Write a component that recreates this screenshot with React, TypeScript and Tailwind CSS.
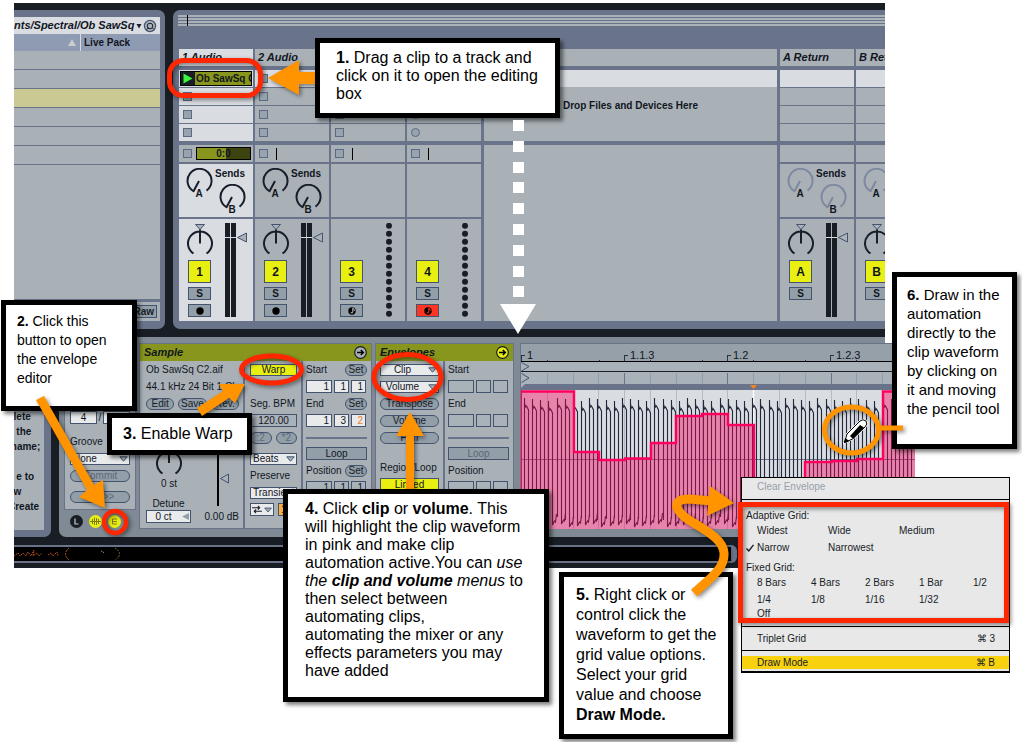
import React from "react";

/* ---------- Small shared controls ---------- */

function Arrow({ className }: { className: string }) {
  return (
    <svg width="9" height="6" viewBox="0 0 9 6" className={className} aria-hidden="true">
      <path d="M0.8 0.8H8.2L4.5 5.2Z" fill="#a9b1b9" stroke="#44546f" />
    </svg>
  );
}

function Pill({ children, dim = false, grow = false }: { children: React.ReactNode; dim?: boolean; grow?: boolean }) {
  return (
    <button
      className={`flex h-3 items-center justify-center whitespace-pre rounded-full border border-[#44546f] bg-[#929ea8] px-0.5 leading-none ${
        grow ? "min-w-0 flex-1" : "w-[22px]"
      } ${dim ? "text-[#5d6976]" : "text-[#171c26]"}`}
    >
      {children}
    </button>
  );
}

function Drop({ label, options, center = false }: { label: string; options: string[]; center?: boolean }) {
  return (
    <div className="relative flex w-full">
      <select
        aria-label={label}
        className={`h-3 w-full appearance-none border border-[#44546f] bg-[#e9eaec] px-0.5 leading-none ${
          center ? "pr-4 text-center" : ""
        }`}
      >
        {options.map((o) => (
          <option key={o}>{o}</option>
        ))}
      </select>
      <Arrow className="pointer-events-none absolute right-0.5 top-[3px]" />
    </div>
  );
}

function Field({ label, value, className }: { label: string; value: string; className: string }) {
  return (
    <input
      aria-label={label}
      defaultValue={value}
      className={`h-[13px] min-w-0 border border-[#44546f] px-0.5 leading-none ${className}`}
    />
  );
}

function Row({ children, className = "" }: { children?: React.ReactNode; className?: string }) {
  return <div className={`flex h-[17px] shrink-0 items-center ${className}`}>{children}</div>;
}

/* ---------- Session view ---------- */

function SendKnob({ name, dim }: { name: string; dim: boolean }) {
  const stroke = dim ? "#7d89a0" : "#191e2b";
  return (
    <svg width="28" height="32" viewBox="0 0 28 32" role="img" aria-label={`Send ${name}`}>
      <path d="M14 13L8.5 23.2A12 12 0 1 1 21.5 22.6" fill="none" stroke={stroke} strokeWidth="2" strokeLinejoin="round" />
      <text x="14" y="29" textAnchor="middle" fontSize="10" fontWeight="700" fill="#12161f">
        {name}
      </text>
    </svg>
  );
}

function PanKnob() {
  return (
    <svg width="28" height="34" viewBox="0 0 28 34" role="img" aria-label="Pan">
      <path d="M9.5 1.5H18.5L14 6.5Z" fill="#a9b1b9" stroke="#44546f" />
      <path d="M14 6.5V20.5M7.5 30.5A12 12 0 1 1 20.5 30.5" fill="none" stroke="#191e2b" strokeWidth="2" />
    </svg>
  );
}

function Meter() {
  return (
    <svg width="24" height="94" viewBox="0 0 24 94" role="img" aria-label="Level">
      <path d="M0 0H5V94H0ZM6 0H11V94H6Z" fill="#191e25" />
      <path d="M0 14.5H11" stroke="#d9dce1" />
      <path d="M12.5 14.5L21.5 10V19Z" fill="#a9b1b9" stroke="#44546f" />
    </svg>
  );
}

function MidiMeter() {
  return (
    <svg width="24" height="94" viewBox="0 0 24 94" role="img" aria-label="MIDI activity">
      {Array.from({ length: 12 }, (_, i) => (
        <circle key={i} cx="12" cy={2.8 + i * 8} r="3" fill="#191e25" />
      ))}
    </svg>
  );
}

function Slot({ round = false }: { round?: boolean }) {
  return (
    <button
      aria-label="Clip slot"
      className={`size-[9px] shrink-0 border border-[#5b6a80] bg-[#98a3b0] ${round ? "rounded-full" : ""}`}
    />
  );
}

type TrackInfo = {
  id: string;
  title: string;
  kind: "audio" | "midi" | "return";
  selected?: boolean;
  playing?: boolean;
  armed?: boolean;
};

function Track({ t }: { t: TrackInfo }) {
  const bg = t.selected ? "bg-[#d9dce1]" : "bg-[#a9b1b7]";
  const isReturn = t.kind === "return";
  return (
    <section className="w-[74px] shrink-0 whitespace-nowrap">
      <h3 className={`mb-1 h-[17px] pl-[3px] text-[11px] font-bold italic leading-4 ${bg}`}>{t.title}</h3>
      <div className="mb-1 flex flex-col gap-px">
        {[0, 1, 2, 3].map((r) => (
          <div key={r} className={`flex h-[17px] items-center ${r === 0 ? "bg-[#d9dce1]" : bg} ${t.playing && r === 0 ? "px-px" : "px-1"}`}>
            {t.playing && r === 0 ? (
              <button className="flex h-[15px] w-full overflow-hidden border border-black bg-[#88961d] text-[10px] font-bold leading-[13px]">
                <svg width="14" height="13" viewBox="0 0 14 13" className="shrink-0 bg-[#191e25]" aria-hidden="true">
                  <path d="M2.5 1.5L11.5 6.5L2.5 11.5Z" fill="#3cf53c" />
                </svg>
                <span className="pl-px">Ob SawSq C</span>
              </button>
            ) : (
              !isReturn && <Slot round={t.armed} />
            )}
          </div>
        ))}
      </div>
      <div className={`mb-0.5 flex h-[17px] items-center px-1 ${isReturn ? bg : "bg-[#a9b1b7]"}`}>
        {!isReturn && <Slot />}
        {t.playing ? (
          <span className="-mr-0.5 ml-1 flex h-[13px] flex-1 items-center justify-center border border-black bg-linear-to-r from-[#88961d] from-55% to-[#3c430e] to-55% text-[10px] font-bold leading-none">
            0:0
          </span>
        ) : (
          !isReturn && <span className="ml-2 h-3 w-px bg-black" />
        )}
      </div>
      <div className={`mb-0.5 flex h-[53px] ${bg}`}>
        {t.kind !== "midi" && (
          <>
            <div className="pl-1.5 pt-1">
              <SendKnob name="A" dim={isReturn} />
            </div>
            <div className="flex flex-col items-center pl-px pt-1 text-[10px] font-bold">
              <span className="h-4 leading-3">Sends</span>
              <div className="pl-1">
                <SendKnob name="B" dim={isReturn} />
              </div>
            </div>
          </>
        )}
      </div>
      <div className={`flex h-[102px] ${bg}`}>
        <div className="flex w-[41px] flex-col items-center gap-1 pt-1">
          <div className="h-[33px]">{t.kind !== "midi" && <PanKnob />}</div>
          <button className="size-[23px] border border-[#44546f] bg-[#e9f011] text-xs font-bold leading-none">{t.id}</button>
          <button className="h-[13px] w-[23px] border border-[#44546f] bg-[#929ea8] text-[10px] font-bold leading-none">S</button>
          {!isReturn && (
            <button
              aria-label="Arm"
              className={`flex h-[13px] w-[23px] items-center justify-center border border-[#44546f] ${t.armed ? "bg-[#ff3421]" : "bg-[#929ea8]"}`}
            >
              <svg width="8" height="8" viewBox="0 0 8 8" aria-hidden="true">
                <circle cx="4" cy="4" r="3.7" fill="#000" />
                {t.kind === "midi" && (
                  <path d="M4.8 1.2V5.6M4.8 5.8H2.6M4.8 1.2Q6.4 2 6.4 3.8" fill="none" stroke={t.armed ? "#ff3421" : "#c4cbd2"} />
                )}
              </svg>
            </button>
          )}
        </div>
        <div className="pl-[5px] pt-1">{t.kind === "midi" ? <MidiMeter /> : <Meter />}</div>
      </div>
    </section>
  );
}

function Browser() {
  return (
    <aside className="flex w-[151px] shrink-0 flex-col overflow-hidden rounded-r-[7px] bg-[#69748b] pb-2 pr-[5px] pt-[7px]">
      <div className="flex h-[17px] items-center justify-between bg-[#d9dce1] pr-[3px]">
        <span className="whitespace-nowrap text-[11px] font-bold italic">nts/Spectral/Ob SawSq</span>
        <svg width="21" height="14" viewBox="0 0 21 14" aria-hidden="true">
          <path d="M0.500 5H5.500L3 9.500Z" fill="#191e25" />
          <circle cx="14" cy="7" r="5.6" fill="#a9b1b9" stroke="#44546f" strokeWidth="1.2" />
          <circle cx="14" cy="7" r="2.8" fill="none" stroke="#191e25" />
          <path d="M10.5 10.500L12.500 8.800M16.500 9L18 10.500" stroke="#191e25" />
        </svg>
      </div>
      <div className="flex h-[17px] bg-[#8f9bb2] text-[10px] font-bold">
        <div className="flex w-[67px] items-center justify-end border-r border-[#d9dce1] pr-1">
          <svg width="8" height="7" viewBox="0 0 8 7" aria-hidden="true">
            <path d="M4 0L8 7H0Z" fill="#c9ccc9" />
          </svg>
        </div>
        <span className="pl-[3px] leading-[17px]">Live Pack</span>
      </div>
      <ul className="flex-1 bg-[#a9b1b7]">
        {[0, 1, 2, 3, 4, 5].map((r) => (
          <li key={r} className={`h-[19px] border-b border-[#69748b] ${r === 2 ? "bg-[#cac993]" : ""}`} />
        ))}
      </ul>
      <div className="mt-[3px] flex h-[19px] items-center justify-end bg-[#a9b1b7] pr-[3px]">
        <button className="h-[13px] border border-[#44546f] bg-[#929ea8] px-0.5 text-[10px] font-bold leading-none text-[#171c26]">Raw</button>
      </div>
    </aside>
  );
}

const tracks: TrackInfo[] = [
  { id: "1", title: "1 Audio", kind: "audio", selected: true, playing: true },
  { id: "2", title: "2 Audio", kind: "audio" },
  { id: "3", title: "", kind: "midi" },
  { id: "4", title: "", kind: "midi", armed: true },
];
const returns: TrackInfo[] = [
  { id: "A", title: "A Return", kind: "return" },
  { id: "B", title: "B Return", kind: "return" },
];

function Session() {
  return (
    <main className="min-w-0 flex-1 overflow-hidden rounded-l-[7px] bg-[#69748b] pb-2 pl-1.5 pt-[5px]">
      <div className="-ml-px mb-[23px] flex h-[11px] flex-col bg-[#69748b]">
        <div className="relative flex flex-1 flex-col gap-px">
          <span className="flex-1 bg-[#a9b1b7]" />
          <span className="flex-1 bg-[#a9b1b7]" />
          <span className="flex-1 bg-[#a9b1b7]" />
          <span className="flex-1 bg-[#a9b1b7]" />
          <span className="absolute inset-y-0 left-[9px] w-px bg-black" />
        </div>
      </div>
      <div className="flex">
        <div className="flex gap-0.5">
          {tracks.map((t) => (
            <Track key={t.id} t={t} />
          ))}
        </div>
        <div className="mx-[3px] flex min-w-0 flex-1 flex-col gap-1">
          <div className="h-[17px] bg-[#a9b1b7]" />
          <div className="flex h-[71px] flex-col bg-[#a9b1b7]">
            <div className="h-[17px] shrink-0 bg-[#d9dce1]" />
            <p className="pt-3 text-center text-[10px] font-bold leading-[14px]">Drop Files and Devices Here</p>
          </div>
          <div className="flex-1 bg-[#a9b1b7]" />
        </div>
        <div className="flex w-[105px] gap-0.5 overflow-hidden">
          {returns.map((t) => (
            <Track key={t.id} t={t} />
          ))}
        </div>
      </div>
    </main>
  );
}

/* ---------- Clip view ---------- */

function PanelHead({ title, lit = false }: { title: string; lit?: boolean }) {
  return (
    <div className="flex h-[17px] items-center justify-between bg-[#88961d] px-1">
      <h3 className="text-[11px] font-bold italic leading-none">{title}</h3>
      <button aria-label={`${title} options`} className="size-[13px]">
        <svg width="13" height="13" viewBox="0 0 13 13" aria-hidden="true">
          <circle cx="6.5" cy="6.5" r="5.8" fill={lit ? "#e9f011" : "#a9b1b9"} stroke="#191e25" strokeWidth="1.2" />
          <path d="M3 6.5H9M6.8 4L9.3 6.5L6.8 9" fill="none" stroke="#000" strokeWidth="1.5" />
        </svg>
      </button>
    </div>
  );
}

function Triple({ label, values, lit = false, accent = false }: { label: string; values: string[]; lit?: boolean; accent?: boolean }) {
  const bg = lit ? "bg-[#e9eaec]" : "bg-[#a9b1b9]";
  return (
    <Row className="gap-0.5">
      <Field label={`${label} bar`} value={values[0]} className={`w-[26px] text-right ${bg}`} />
      <Field label={`${label} beat`} value={values[1]} className={`w-[15px] text-right ${bg}`} />
      <Field label={`${label} sixteenth`} value={values[2]} className={`w-[15px] text-right ${bg} ${accent ? "text-[#f07a1c]" : ""}`} />
    </Row>
  );
}

function Times({ active }: { active: boolean }) {
  const v = (a: string[]) => (active ? a : ["", "", ""]);
  return (
    <div className="flex w-[61px] shrink-0 flex-col">
      <Row className="justify-between">
        Start {active && <Pill>Set</Pill>}
      </Row>
      <Triple label="Start" values={v(["1", "1", "1"])} lit={active} />
      <Row className="justify-between">
        End {active && <Pill>Set</Pill>}
      </Row>
      <Triple label="End" values={v(["1", "3", "2"])} lit={active} accent />
      <div className="my-2 h-0.5 bg-[#69748b]" />
      <button className={`h-[13px] border border-[#44546f] bg-[#929ea8] leading-none ${active ? "" : "text-[#5d6976]"}`}>Loop</button>
      <Row className="mt-0.5 justify-between">
        Position {active && <Pill>Set</Pill>}
      </Row>
      <Triple label="Position" values={v(["1", "1", "1"])} />
    </div>
  );
}

function HelpText() {
  return (
    <aside className="w-[37px] shrink-0 rounded-br-[7px] bg-[#69748b] pb-[7px] pr-[7px]">
      <div className="h-full overflow-hidden bg-[#a9b1b7] pt-[72px]">
        <p className="-ml-1.5 whitespace-pre text-[10px] font-bold leading-[15px]">
          {"  lete\n   the\n name;\n\n   e to\n  w\nCreate"}
        </p>
      </div>
    </aside>
  );
}

function ClipBox() {
  return (
    <div className="flex w-[72px] shrink-0 flex-col">
      <div className="flex h-[167px] flex-col justify-end border border-[#69748b] bg-[#a9b1b7] px-[5px] pb-1">
        <div className="mb-2 flex items-center justify-between">
          <Field label="Signature numerator" value="4" className="w-[27px] bg-[#e9eaec] text-center" />/
          <Field label="Signature denominator" value="4" className="w-[27px] bg-[#e9eaec] text-center" />
        </div>
        <Row>Groove</Row>
        <Row>
          <Drop label="Groove" options={["None"]} />
        </Row>
        <Row>
          <Pill grow dim>Commit</Pill>
        </Row>
        <Row className="mt-1">
          <Pill grow dim>{"<<  >>"}</Pill>
        </Row>
      </div>
      <svg width="72" height="19" viewBox="0 0 72 19" role="img" aria-label="Clip box selectors">
        <circle cx="12.500" cy="11.500" r="6.500" fill="#191e25" />
        <path d="M11 8.500V14H14.500" fill="none" stroke="#c4cbd2" strokeWidth="1.200" />
        <circle cx="31.500" cy="11.500" r="6.500" fill="#e9f011" />
        <path d="M26 11.500H37M28.500 9V14M30.500 7.500V15M32.500 8V15M34.500 9V14" stroke="#7d7a12" fill="none" />
        <circle cx="50.500" cy="11.500" r="6.500" fill="#e9f011" />
        <path d="M53 9H48.500V14H53M48.500 11.500H53" stroke="#7d7a12" fill="none" />
      </svg>
    </div>
  );
}

function SamplePanel() {
  return (
    <section className="w-[233px] shrink-0 border border-[#69748b] bg-[#a9b1b7]">
      <PanelHead title="Sample" />
      <div className="flex h-[167px] gap-[3px] px-1">
        <div className="flex w-[101px] shrink-0 flex-col border-r-2 border-[#69748b] pl-0.5">
          <Row>Ob SawSq C2.aif</Row>
          <Row className="whitespace-nowrap">44.1 kHz 24 Bit 1 Ch</Row>
          <Row className="gap-1 pr-1">
            <Pill grow>Edit</Pill>
            <Pill grow>Save</Pill>
            <Pill grow>Rev.</Pill>
          </Row>
          <div className="mt-[38px] flex justify-between pr-2">
            <div className="flex w-[46px] flex-col items-center">
              <svg width="28" height="28" viewBox="0 0 28 28" role="img" aria-label="Transpose">
                <path d="M14 1V13M7.500 23.500A12 12 0 1 1 20.500 23.500" fill="none" stroke="#191e2b" strokeWidth="2" />
              </svg>
              <span className="leading-3">0 st</span>
            </div>
            <svg width="20" height="56" viewBox="0 0 20 56" role="img" aria-label="Gain">
              <path d="M3 0V56" stroke="#000" strokeWidth="2" />
              <path d="M5.500 28.500L13.500 24V33Z" fill="#a9b1b9" stroke="#44546f" />
            </svg>
          </div>
          <div className="-mt-2 flex items-end justify-between pr-1">
            <label className="flex flex-col items-center leading-3">
              Detune
              <span className="relative flex">
                <Field label="Detune" value="0 ct" className="w-[45px] bg-[#e9eaec] pr-3 text-center" />
                <svg width="8" height="7" viewBox="0 0 8 7" className="absolute right-px top-[3px]" aria-hidden="true">
                  <path d="M0 3.500L7 0V7Z" fill="#929ea8" />
                </svg>
              </span>
            </label>
            <span className="whitespace-nowrap leading-3">0.00 dB</span>
          </div>
        </div>
        <div className="flex w-[55px] shrink-0 flex-col border-r-2 border-[#69748b] pl-0.5 pr-1">
          <Row>
            <button className="h-3 w-full border border-[#44546f] bg-[#e9f011] leading-none">Warp</button>
          </Row>
          <Row />
          <Row className="whitespace-nowrap">Seg. BPM</Row>
          <Row>
            <Field label="Segment BPM" value="120.00" className="w-full bg-[#a9b1b9] text-center" />
          </Row>
          <Row className="gap-1">
            <Pill grow dim>:2</Pill>
            <Pill grow dim>*2</Pill>
          </Row>
          <Row className="mt-1">
            <Drop label="Warp mode" options={["Beats"]} />
          </Row>
          <Row>Preserve</Row>
          <Row>
            <Drop label="Preserve" options={["Transients"]} />
          </Row>
          <Row className="gap-1">
            <button aria-label="Loop mode" className="flex h-[13px] w-6 shrink-0 items-center gap-0.5 border border-[#44546f] bg-[#e9eaec] px-px">
              <svg width="11" height="9" viewBox="0 0 11 9" aria-hidden="true">
                <path d="M0 2.500H8M3 6.500H11M6.500 0.500L8.500 2.500L6.500 4.500M4.500 4.500L2.500 6.500L4.500 8.500" fill="none" stroke="#191e25" strokeWidth="1.200" />
              </svg>
              <Arrow className="" />
            </button>
            <span className="h-[13px] flex-1 border border-[#44546f] bg-[#fbb040] pl-0.5 leading-[11px]">1</span>
          </Row>
        </div>
        <Times active />
      </div>
    </section>
  );
}

function EnvelopesPanel() {
  return (
    <section className="w-[139px] shrink-0 border border-[#69748b] bg-[#a9b1b7]">
      <PanelHead title="Envelopes" lit />
      <div className="flex h-[167px] gap-[3px] pl-1">
        <div className="flex w-[65px] shrink-0 flex-col border-r-2 border-[#69748b] pr-1">
          <Row>
            <Drop label="Device" options={["Clip"]} center />
          </Row>
          <Row>
            <Drop label="Control" options={["Volume"]} center />
          </Row>
          <Row>
            <Pill grow>Transpose</Pill>
          </Row>
          <Row>
            <Pill grow>Volume</Pill>
          </Row>
          <Row>
            <Pill grow>Pan</Pill>
          </Row>
          <Row className="mt-[13px] whitespace-nowrap">Region/Loop</Row>
          <Row>
            <button className="h-[13px] w-full border border-[#44546f] bg-[#e9f011] leading-none">Linked</button>
          </Row>
        </div>
        <Times active={false} />
      </div>
    </section>
  );
}

const ENVELOPE =
  "M0 1.500H53V62H78V70H104V68.500H130V53H155V26H181V24H207V35H233V142H284V72H311V71H336V69H362V1.500H394";
const peaks = Array.from({ length: 49 }, (_, i) => ({
  x: Math.round(i * 8.15 + 3) + 0.5,
  top: 8 + ((i * 5) % 4),
  low: 130 + ((i * 3) % 4),
}));

function Waveform() {
  return (
    <svg width="100%" height="139" className="block bg-[#d9dce1]" role="img" aria-label="Clip waveform with volume envelope">
      {Array.from({ length: 15 }, (_, i) => (
        <path key={i} d={`M${Math.round((i + 1) * 25.8) + 0.5} 0V139`} stroke="#b3bac9" />
      ))}
      <path d="M0 69.500H394" stroke="#69748b" />
      <path d="M232.500 0V139" stroke="#fff" strokeWidth="1.500" />
      {peaks.map((p) => (
        <path
          key={p.x}
          d={`M${p.x} ${p.top}V${p.low - 3}M${p.x} ${p.top + 5}L${p.x + 1} ${p.top + 9}L${p.x + 2} ${p.top + 8}L${p.x + 4} ${p.top + 12}V${p.low + 4}L${p.x + 6} ${p.low}L${p.x + 7} ${p.low + 1}L${p.x + 8} ${p.low - 7}`}
          fill="none"
          stroke="#20283a"
          strokeWidth="1.100"
        />
      ))}
      <path d={`${ENVELOPE}V142H0Z`} fill="#ff005a" fillOpacity="0.400" />
      <path d={ENVELOPE} fill="none" stroke="#ff005f" strokeWidth="2.400" />
      <path d="M0 0V139" stroke="#ff005f" strokeWidth="2" />
    </svg>
  );
}

function WavePanel() {
  return (
    <section className="-mr-[30px] min-w-0 flex-1 self-start border-l border-t border-[#69748b] bg-[#95a0a8]">
      <div className="flex h-[18px] items-end overflow-hidden border-b border-black text-[11px]">
        {["1", "1.1.3", "1.2", "1.2.3"].map((m) => (
          <div key={m} className="relative flex w-[103px] shrink-0 items-end">
            <span className="h-1.5 w-1 border-l border-t border-[#2b3340]" />
            <span className="pl-0.5 leading-3">{m}</span>
            <span className="absolute bottom-0 left-[26px] h-px w-px bg-[#2b3340]" />
            <span className="absolute bottom-0 left-[78px] h-px w-px bg-[#2b3340]" />
          </div>
        ))}
      </div>
      <svg width="100%" height="28" className="block bg-[#a9b1b9]" aria-hidden="true">
        {Array.from({ length: 15 }, (_, i) => (
          <path key={i} d={`M${Math.round((i + 1) * 25.8) + 0.5} 11V22`} stroke={i % 4 === 3 ? "#69748b" : "#919caf"} />
        ))}
        <path d="M0 9.500H394" stroke="#191e25" />
        <path d="M0.500 0.500L8 4.500L0.500 9M0.500 11.500L8 16L0.500 20.500" fill="none" stroke="#44546f" />
        <path d="M0 22H394V28H0Z" fill="#69748b" />
        <path d="M0 22H4L0 26Z" fill="#a9b1b9" />
        <path d="M229 23H236L232.500 27Z" fill="#f5821f" />
      </svg>
      <Waveform />
    </section>
  );
}

function StatusBar() {
  return (
    <footer className="mt-2 pb-[5px]">
      <div className="mr-[148px] rounded-r-md bg-[#69748b] py-0.5 pr-1.5">
        <svg width="100%" height="14" className="block bg-black" role="img" aria-label="Status">
          <path
            d="M0 9L4 6L6 9L9 6L12 9L14 5L17 9L20 3L19 9L23 6L25 9L28 6M34 8L37 6L39 9L43 5L44 9"
            fill="none"
            stroke="#c4541c"
            strokeDasharray="1.500 1"
          />
          <path d="M55 1Q48 7 55 13" fill="none" stroke="#c4541c" strokeDasharray="2 1" />
          <path d="M87 4L90 5L88 7M101 1Q110 7 101 13" fill="none" stroke="#a08a3c" strokeDasharray="1.500 1.500" />
        </svg>
      </div>
    </footer>
  );
}

/* ---------- Context menu ---------- */

function GridOption({ children, checked = false }: { children: React.ReactNode; checked?: boolean }) {
  return (
    <button className="relative text-left leading-none">
      {checked && (
        <svg width="8" height="8" viewBox="0 0 8 8" className="absolute -left-[11px] top-px" aria-hidden="true">
          <path d="M0.500 4.500L2.800 7L7.500 0.800" fill="none" stroke="#12161f" strokeWidth="1.300" />
        </svg>
      )}
      {children}
    </button>
  );
}

function ContextMenu() {
  return (
    <div className="absolute left-[741px] top-[477px] w-[269px] border border-b-2 border-black bg-[#e8e8e8] text-[10px] text-[#171c26]">
      <button className="block h-[21px] w-full pb-1 pl-[15px] text-left leading-none text-[#96a0ab]">Clear Envelope</button>
      <div className="border-y border-black pb-1.5 pl-1 pt-2.5">
        <p className="leading-3">Adaptive Grid:</p>
        <div className="grid grid-cols-[71px_71px_71px] pl-[11px]">
          {["Widest", "Wide", "Medium", "Narrow", "Narrowest"].map((o) => (
            <div key={o} className="flex h-[17px] items-center">
              <GridOption checked={o === "Narrow"}>{o}</GridOption>
            </div>
          ))}
        </div>
        <p className="mt-1.5 leading-3">Fixed Grid:</p>
        <div className="grid grid-cols-[54px_54px_54px_54px_auto] pl-[11px]">
          {["8 Bars", "4 Bars", "2 Bars", "1 Bar", "1/2", "1/4", "1/8", "1/16", "1/32"].map((o) => (
            <div key={o} className="flex h-[17px] items-center">
              <GridOption>{o}</GridOption>
            </div>
          ))}
        </div>
        <div className="flex h-3 items-center pl-[11px]">
          <GridOption>Off</GridOption>
        </div>
      </div>
      <button className="flex h-6 w-full items-center justify-between border-b border-black pl-[15px] pr-3.5">
        <span>Triplet Grid</span>
        <span>⌘ 3</span>
      </button>
      <button className="mt-[5px] flex h-[13px] w-full items-center justify-between bg-[#f9d20f] pl-[15px] pr-3.5 leading-none">
        <span>Draw Mode</span>
        <span>⌘ B</span>
      </button>
      <div className="h-0.5" />
    </div>
  );
}

/* ---------- Annotations ---------- */

function Note({ className, children }: { className: string; children: React.ReactNode }) {
  return (
    <div className={`absolute border-5 border-black bg-white text-black shadow-[3px_3px_4px_rgba(0,0,0,0.5)] ${className}`}>
      {children}
    </div>
  );
}

function MarksBelow() {
  return (
    <svg className="pointer-events-none absolute inset-0 h-[742px] w-full drop-shadow-[2px_2px_2px_rgba(0,0,0,0.45)]" aria-hidden="true">
      <rect x="169.500" y="60.500" width="91" height="35" rx="14" fill="none" stroke="#ff2600" strokeWidth="5" />
      <path d="M268 78L299 60V72H318V84H299V95Z" fill="#ff9300" />
      <ellipse cx="271.500" cy="369.500" rx="30" ry="13.500" fill="none" stroke="#ff2600" strokeWidth="5" />
      <ellipse cx="407.500" cy="377" rx="33.500" ry="22.500" fill="none" stroke="#ff2600" strokeWidth="5" />
      <path d="M410 412L424 436H414V492H406V436H396Z" fill="#ff9300" />
      <circle cx="115" cy="522" r="11" fill="none" stroke="#ff2600" strokeWidth="4.500" />
    </svg>
  );
}

function DashedArrow() {
  return (
    <svg className="pointer-events-none absolute left-[500px] top-[118px] h-[216px] w-9" aria-hidden="true">
      {Array.from({ length: 9 }, (_, i) => (
        <rect key={i} x="13" y={Math.round(2 + i * 20.8)} width="11" height="11" fill="#fff" />
      ))}
      <path d="M0 186H36L18 216Z" fill="#fff" />
    </svg>
  );
}

function MarksAbove() {
  return (
    <svg className="pointer-events-none absolute inset-0 h-[742px] w-full drop-shadow-[2px_2px_2px_rgba(0,0,0,0.45)]" aria-hidden="true">
      <path d="M36 400L44 396L94 485L103 480L105 508L79 497L87 490Z" fill="#ff9300" />
      <path d="M197 408L223 391L219 384H245L235 403L229 398L202 416Z" fill="#ff9300" />
      <ellipse cx="851.500" cy="430" rx="27" ry="23" fill="none" stroke="#ff9300" strokeWidth="5" />
      <path d="M880 428H903" stroke="#ff9300" strokeWidth="5" />
      <path
        d="M694 593C711 578 725 568 724 553C723 537 700 528 686 518C672 507 674 499 690 499L711 501"
        fill="none"
        stroke="#ff9300"
        strokeWidth="9"
      />
      <path d="M710 486L734 503L707 516Z" fill="#ff9300" />
      <rect x="740.500" y="504.500" width="266" height="116" fill="none" stroke="#ff2600" strokeWidth="5" />
    </svg>
  );
}

function Pencil() {
  return (
    <svg width="26" height="26" viewBox="0 0 26 26" className="pointer-events-none absolute left-[843px] top-[418px]" aria-hidden="true">
      <path d="M1.500 24.500L4 16L17 3Q20 0.500 23 3Q25 6 22 9L9.500 21Z" fill="#fff" stroke="#fff" strokeWidth="2" />
      <path d="M1.500 24.500L4 16L17 3Q20 0.500 23 3Q25 6 22 9L9.500 21Z" fill="#fff" stroke="#000" strokeWidth="1" />
      <path d="M7 18L17 7L21 9.500L10 21Z" fill="#000" />
      <path d="M1.500 24.500L2.500 20.500L5.500 23Z" fill="#000" stroke="#000" />
    </svg>
  );
}

export default function App() {
  return (
    <div className="relative min-h-screen overflow-hidden bg-white pt-[3px] font-['Liberation_Sans',Arial,sans-serif] text-[#12161f]">
      <div className="ml-3.5 mr-[137px] bg-[#191e25] pt-[7px]">
        <div className="flex gap-2">
          <Browser />
          <Session />
        </div>
        <div className="mt-2 flex gap-2 text-[10px]">
          <HelpText />
          <div className="flex min-w-0 flex-1 rounded-l-[7px] bg-[#7f8a94] pb-2 pl-[5px] pt-1.5">
            <ClipBox />
            <div className="ml-[3px] flex gap-[3px]">
              <SamplePanel />
              <EnvelopesPanel />
            </div>
            <div className="ml-1.5 flex min-w-0 flex-1">
              <WavePanel />
            </div>
          </div>
        </div>
        <StatusBar />
      </div>

      <MarksBelow />
      <ContextMenu />

      <Note className="left-[315px] top-[38px] h-20 w-[245px] pl-4 pt-1.5 text-base/[18px]">
        <p>
          <b>1.</b> Drag a clip to a track and
          <br />
          click on it to open the editing
          <br />
          box
        </p>
      </Note>
      <DashedArrow />
      <Note className="left-px top-[300px] h-[111px] w-[136px] pl-[11px] pt-[7px] text-sm/[19px]">
        <p>
          <b>2.</b> Click this
          <br />
          button to open
          <br />
          the envelope
          <br />
          editor
        </p>
      </Note>
      <Note className="left-[107px] top-[413px] h-[42px] w-[145px] pl-[11px] pt-1.5 text-base/[19px]">
        <p>
          <b>3.</b> Enable Warp
        </p>
      </Note>
      <Note className="left-[283px] top-[489px] h-[213px] w-[266px] pl-[17px] pt-1.5 text-base/[18px]">
        <p className="whitespace-nowrap">
          <b>4.</b> Click <b>clip</b> or <b>volume</b>. This
          <br />
          will highlight the clip waveform
          <br />
          in pink and make clip
          <br />
          automation active.You can <i>use</i>
          <br />
          <i>
            the <b>clip and volume</b> menus
          </i>{" "}
          to
          <br />
          then select between
          <br />
          automating clips,
          <br />
          automating the mixer or any
          <br />
          effects parameters you may
          <br />
          have added
        </p>
      </Note>
      <Note className="left-[559px] top-[572px] h-[167px] w-[174px] pl-3 pt-2 text-base/[20px]">
        <p className="whitespace-nowrap">
          <b>5.</b> Right click or
          <br />
          control click the
          <br />
          waveform to get the
          <br />
          grid value options.
          <br />
          Select your grid
          <br />
          value and choose
          <br />
          <b>Draw Mode.</b>
        </p>
      </Note>
      <Note className="left-[892px] top-[272px] h-[177px] w-[125px] pl-2.5 pt-2 text-[15px]/[19px]">
        <p className="whitespace-nowrap">
          <b>6.</b> Draw in the
          <br />
          automation
          <br />
          directly to the
          <br />
          clip waveform
          <br />
          by clicking on
          <br />
          it and moving
          <br />
          the pencil tool
        </p>
      </Note>
      <MarksAbove />
      <Pencil />
    </div>
  );
}
